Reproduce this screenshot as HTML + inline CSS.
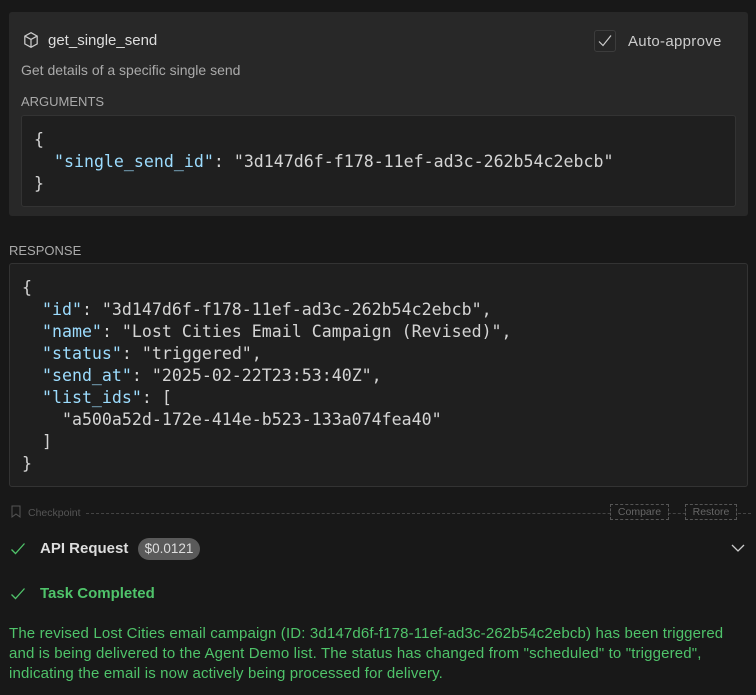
<!DOCTYPE html>
<html><head><meta charset="utf-8"><style>
*{margin:0;padding:0;box-sizing:border-box}
body{width:756px;height:695px;background:#181818;font-family:"Liberation Sans",sans-serif;color:#ccc;position:relative;overflow:hidden}
.abs{position:absolute;white-space:nowrap}
.card{position:absolute;left:9px;top:12px;width:739px;height:204px;background:#282828;border-radius:3px}
.code{position:absolute;background:#1f1f1f;border:1px solid #333;border-radius:3px;font-family:"DejaVu Sans Mono","Liberation Mono",monospace;font-size:16.6px;line-height:22px;color:#d4d4d4;white-space:pre;padding-left:12px}
.k{color:#9cdcfe}
.lbl{font-size:13px;color:#aaa}
.g{color:#4fc36a}
</style></head><body>
<div class="card"></div>
<svg class="abs" style="left:22px;top:31px" width="18" height="18" viewBox="0 0 16 16" fill="none" stroke="#ccc" stroke-width="1.1"><path d="M8 1.5l5.5 3v7L8 14.5 2.5 11.5v-7z M2.5 4.5L8 7.5l5.5-3 M8 7.5v7"/></svg>
<div class="abs" style="left:48px;top:32px;font-size:15px;color:#ddd">get_single_send</div>
<div class="abs" style="left:594px;top:30px;width:22px;height:22px;border:1px solid #3c3c3c;border-radius:3px;background:#262626"></div>
<svg class="abs" style="left:597px;top:33px" width="16" height="16" viewBox="0 0 16 16" fill="none" stroke="#ccc" stroke-width="1.2"><path d="M2 8.5l4 4 8-10"/></svg>
<div class="abs" style="left:628px;top:33px;font-size:15px;color:#ccc;letter-spacing:0.3px">Auto-approve</div>
<div class="abs lbl" style="left:21px;top:62px;font-size:14px">Get details of a specific single send</div>
<div class="abs lbl" style="left:21px;top:94px">ARGUMENTS</div>
<div class="code" style="left:21px;top:115px;width:715px;height:92px;padding-top:13px">{
  <span class="k">"single_send_id"</span>: "3d147d6f-f178-11ef-ad3c-262b54c2ebcb"
}</div>
<div class="abs lbl" style="left:9px;top:243px">RESPONSE</div>
<div class="code" style="left:9px;top:263px;width:739px;height:224px;padding-top:13px">{
  <span class="k">"id"</span>: "3d147d6f-f178-11ef-ad3c-262b54c2ebcb",
  <span class="k">"name"</span>: "Lost Cities Email Campaign (Revised)",
  <span class="k">"status"</span>: "triggered",
  <span class="k">"send_at"</span>: "2025-02-22T23:53:40Z",
  <span class="k">"list_ids"</span>: [
    "a500a52d-172e-414e-b523-133a074fea40"
  ]
}</div>
<svg class="abs" style="left:11px;top:505px" width="10" height="13" viewBox="0 0 10 13" fill="none" stroke="#555" stroke-width="1"><path d="M1 1h8v11L5 9 1 12z"/></svg>
<div class="abs" style="left:28px;top:507px;font-size:10.5px;color:#555">Checkpoint</div>
<div class="abs" style="left:86px;top:513px;width:665px;border-top:1px dashed #444"></div>
<div class="abs" style="left:610px;top:504px;width:59px;height:16px;border:1px dashed #555;background:#181818;font-size:10.5px;color:#666;text-align:center;line-height:14px">Compare</div>
<div class="abs" style="left:685px;top:504px;width:52px;height:16px;border:1px dashed #555;background:#181818;font-size:10.5px;color:#666;text-align:center;line-height:14px">Restore</div>
<svg class="abs" style="left:10px;top:541px" width="16" height="16" viewBox="0 0 16 16" fill="none" stroke="#4fc36a" stroke-width="1.3"><path d="M1.5 8.5l4 4 9-10"/></svg>
<div class="abs" style="left:40px;top:540px;font-size:15px;font-weight:bold;color:#ddd">API Request</div>
<div class="abs" style="left:138px;top:538px;width:62px;height:22px;border-radius:11px;background:#5a5a5a;color:#ddd;font-size:13.5px;text-align:center;line-height:22px">$0.0121</div>
<svg class="abs" style="left:731px;top:543px" width="14" height="10" viewBox="0 0 14 10" fill="none" stroke="#ccc" stroke-width="1.3"><path d="M1 2l6 6 6-6"/></svg>
<svg class="abs" style="left:10px;top:586px" width="16" height="16" viewBox="0 0 16 16" fill="none" stroke="#4fc36a" stroke-width="1.3"><path d="M1.5 8.5l4 4 9-10"/></svg>
<div class="abs g" style="left:40px;top:585px;font-size:15px;font-weight:bold">Task Completed</div>
<div class="abs g" style="left:9px;top:624px;font-size:15px;line-height:20px;letter-spacing:0.15px">The revised Lost Cities email campaign (ID: 3d147d6f-f178-11ef-ad3c-262b54c2ebcb) has been triggered<br>and is being delivered to the Agent Demo list. The status has changed from "scheduled" to "triggered",<br>indicating the email is now actively being processed for delivery.</div>
</body></html>
